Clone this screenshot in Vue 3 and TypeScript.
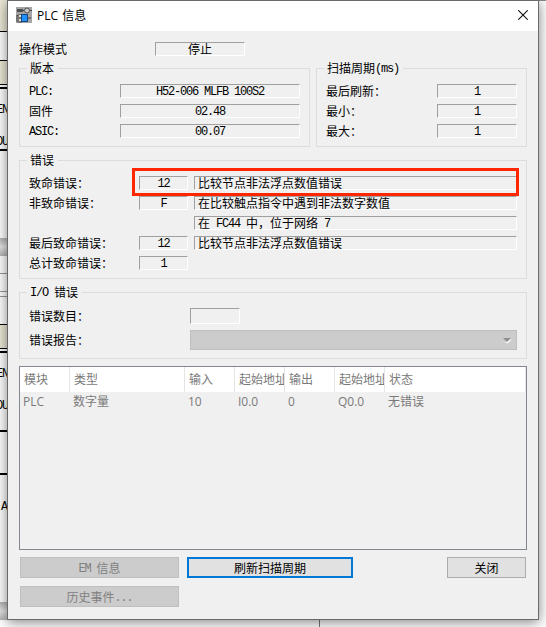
<script setup lang="ts">
import { h, type FunctionalComponent } from 'vue'

// Splits a label into half-width and full-width runs so Latin glyphs keep a 6px cell.
const Label: FunctionalComponent<{ text: string }> = (props) =>
  h(
    'span',
    { class: 'label' },
    (props.text.match(/[\x20-\x7e]+|[^\x20-\x7e]+/g) ?? []).map((run) =>
      h('span', { class: /^[\x20-\x7e]/.test(run) ? 'half' : 'full' }, run),
    ),
  )
Label.props = ['text']

interface Pair {
  name: string
  value: string
}

interface ErrorRow {
  name: string
  code?: string
  message?: string
}

const versions: Pair[] = [
  { name: 'PLC:', value: 'H52-006 MLFB 100S2' },
  { name: '固件', value: '02.48' },
  { name: 'ASIC:', value: '00.07' },
]

const scans: Pair[] = [
  { name: '最后刷新：', value: '1' },
  { name: '最小：', value: '1' },
  { name: '最大：', value: '1' },
]

const errors: ErrorRow[] = [
  { name: '致命错误：', code: '12', message: '比较节点非法浮点数值错误' },
  { name: '非致命错误：', code: 'F', message: '在比较触点指令中遇到非法数字数值' },
  { name: '', message: '在 FC44 中，位于网络 7' },
  { name: '最后致命错误：', code: '12', message: '比较节点非法浮点数值错误' },
  { name: '总计致命错误：', code: '1' },
]

const columns: string[] = ['模块', '类型', '输入', '起始地址', '输出', '起始地址', '状态']
const cells: string[] = ['PLC', '数字量', '10', 'I0.0', '0', 'Q0.0', '无错误']
</script>

<template>
  <div class="desktop">
    <svg class="backdrop" width="546" height="627" viewBox="0 0 546 627" shape-rendering="crispEdges">
      <defs>
        <linearGradient id="thumb" x1="0" y1="0" x2="0" y2="1">
          <stop offset="0" stop-color="#b4b4b4" />
          <stop offset="0.5" stop-color="#e6e6e6" />
          <stop offset="1" stop-color="#b4b4b4" />
        </linearGradient>
      </defs>
      <rect width="546" height="627" fill="#fff" />
      <rect width="546" height="1" fill="#8c8c86" />
      <rect width="8" height="31" fill="#ece9d8" />
      <rect y="31" width="8" height="1" fill="#000" />
      <rect y="60" width="8" height="1" fill="#000" />
      <rect y="61" width="8" height="23" fill="#ece9d8" />
      <rect y="84" width="8" height="1" fill="#000" />
      <rect y="87" width="8" height="2" fill="#000" />
      <rect y="149" width="8" height="2" fill="#000" />
      <rect y="238" width="8" height="18" fill="url(#thumb)" />
      <rect y="273" width="8" height="1" fill="#999" />
      <rect y="291" width="8" height="1" fill="#999" />
      <rect y="296" width="8" height="1" fill="#999" />
      <rect y="324" width="8" height="1" fill="#000" />
      <rect y="325" width="8" height="23" fill="#ece9d8" />
      <rect y="348" width="8" height="1" fill="#000" />
      <rect y="351" width="8" height="2" fill="#000" />
      <rect y="430" width="8" height="2" fill="#000" />
      <rect y="473" width="8" height="2" fill="#000" />
      <rect y="602" width="8" height="18" fill="url(#thumb)" />
      <rect x="319" y="619" width="1" height="8" fill="#777" />
      <text x="-4" y="113">EN</text>
      <text x="-4" y="145">OU</text>
      <text x="-4" y="377">EN</text>
      <text x="-4" y="409">OU</text>
      <text x="1" y="510">A</text>
    </svg>

    <main class="window">
      <header class="titlebar">
        <svg class="app-icon" width="16" height="16" viewBox="0 0 16 16">
          <rect width="16" height="16" fill="#a5a5a5" />
          <rect x="1" y="2" width="6" height="3" fill="#4e4e4e" />
          <path d="M7 3.5h2M14 3.5h2M1 8.5h5M1 8v7M12 11h3" stroke="#444" fill="none" />
          <circle cx="11" cy="3.5" r="2.5" fill="#c8c8c8" stroke="#555" />
          <path d="M2 7h4v9H2z" fill="#777" />
          <rect x="3" y="8" width="2" height="2" fill="#ddd" />
          <rect x="3" y="12" width="2" height="2" fill="#ddd" />
          <rect x="5.5" y="7.5" width="6" height="7" fill="#1e90ff" stroke="#17477c" />
        </svg>
        <h1 class="title">PLC 信息</h1>
        <svg class="close-icon" width="10" height="10" viewBox="0 0 10 10">
          <path d="M0.3 0.3L9.7 9.7M9.7 0.3L0.3 9.7" stroke="#111" stroke-width="1.1" />
        </svg>
      </header>

      <div class="mode">
        <Label text="操作模式" />
        <div class="field"><Label text="停止" /></div>
      </div>

      <div class="top-groups">
        <section class="group versions">
          <h2 class="legend"><Label text="版本" /></h2>
          <div v-for="row in versions" :key="row.name" class="row">
            <Label :text="row.name" />
            <div class="field"><Label :text="row.value" /></div>
          </div>
        </section>
        <section class="group scans">
          <h2 class="legend"><Label text="扫描周期(ms)" /></h2>
          <div v-for="row in scans" :key="row.name" class="row">
            <Label :text="row.name" />
            <div class="field"><Label :text="row.value" /></div>
          </div>
        </section>
      </div>

      <section class="group errors">
        <h2 class="legend"><Label text="错误" /></h2>
        <div v-for="(row, i) in errors" :key="i" class="row">
          <Label :text="row.name" />
          <div v-if="row.code" class="field"><Label :text="row.code" /></div>
          <div v-else></div>
          <div v-if="row.message" class="field message"><Label :text="row.message" /></div>
        </div>
        <div class="highlight"></div>
      </section>

      <section class="group io">
        <h2 class="legend"><Label text="I/O 错误" /></h2>
        <div class="row count">
          <Label text="错误数目：" />
          <div class="field"></div>
        </div>
        <div class="row report">
          <Label text="错误报告：" />
          <div class="select">
            <svg width="9" height="5" viewBox="0 0 9 5">
              <path d="M2 5L8 0.5V2L5 5z" fill="#fff" />
              <path d="M0 0h8L4 4z" fill="#8f8f8f" />
            </svg>
          </div>
        </div>
      </section>

      <div class="table">
        <div class="tr th">
          <span v-for="(c, i) in columns" :key="i" class="cell">{{ c }}</span>
        </div>
        <div class="tr">
          <span v-for="(c, i) in cells" :key="i" class="cell">{{ c }}</span>
        </div>
      </div>

      <div class="actions">
        <button class="btn" disabled><Label text="EM 信息" /></button>
        <button class="btn primary"><Label text="刷新扫描周期" /></button>
        <button class="btn close"><Label text="关闭" /></button>
        <button class="btn" disabled><Label text="历史事件..." /></button>
      </div>
    </main>
  </div>
</template>

<style>
body {
  overflow: hidden;
}
.label {
  display: inline-flex;
  align-items: center;
  height: 12px;
  font-size: 12px;
  line-height: 12px;
  white-space: pre;
}
.label .half {
  padding-top: 2px;
  font-family: "Liberation Mono", monospace;
  letter-spacing: -1.2px;
}
.label .full {
  font-family: "Noto Sans CJK SC", sans-serif;
}
</style>

<style scoped>
.desktop {
  position: relative;
  box-sizing: border-box;
  width: 546px;
  height: 627px;
  padding: 0 7px 7px;
  overflow: hidden;
  color: #000;
}
.backdrop {
  position: absolute;
  inset: 0;
}
.backdrop text {
  font: 12px "Liberation Mono", monospace;
  letter-spacing: -1.2px;
}
.window {
  position: relative;
  box-sizing: border-box;
  width: 532px;
  height: 620px;
  border: 1px solid #6a6a6a;
  background: #f0f0f0;
  box-shadow: 0 2px 12px rgba(0, 0, 0, 0.5);
}
.titlebar {
  display: flex;
  align-items: center;
  box-sizing: border-box;
  height: 30px;
  padding: 0 10px 0 8px;
  background: #fff;
}
.app-icon {
  margin-bottom: 2px;
}
.close-icon {
  margin-bottom: 2px;
}
.title {
  flex: 1;
  margin: 0 0 0 5px;
  font: 400 12px/16px "Open Sans", "Noto Sans CJK SC", sans-serif;
  word-spacing: 1px;
}
.mode {
  display: flex;
  align-items: center;
  height: 14px;
  margin: 11px 0 12px;
  padding-left: 11px;
}
.mode .field {
  width: 90px;
  margin-left: 88px;
}
.field {
  display: flex;
  align-items: center;
  justify-content: center;
  box-sizing: border-box;
  height: 14px;
  border: 1px solid;
  border-color: #a0a0a0 #fff #fff #a0a0a0;
}
.top-groups {
  display: flex;
  gap: 6px;
  margin-left: 11px;
}
.group {
  position: relative;
  box-sizing: border-box;
  border: 1px solid #dcdcdc;
}
.legend {
  position: absolute;
  top: -7px;
  left: 7px;
  display: flex;
  margin: 0;
  padding: 0 4px 0 3px;
  background: #f0f0f0;
  font-weight: 400;
}
.row {
  display: grid;
  align-items: center;
  height: 14px;
  margin-bottom: 6px;
}
.versions,
.scans {
  height: 79px;
  padding-top: 15px;
}
.versions {
  width: 291px;
  padding-left: 9px;
}
.versions .row {
  grid-template-columns: 91px 180px;
}
.scans {
  width: 211px;
  padding-left: 9px;
}
.scans .row {
  grid-template-columns: 111px 80px;
}
.errors {
  width: 508px;
  height: 119px;
  margin: 13px 0 0 11px;
  padding: 15px 0 0 9px;
}
.errors .row {
  grid-template-columns: 110px 49px 323px;
}
.errors .row .message {
  margin-left: 6px;
  width: 323px;
  justify-content: flex-start;
  padding-left: 3px;
}
.highlight {
  position: absolute;
  top: 7px;
  left: 112px;
  box-sizing: border-box;
  width: 387px;
  height: 28px;
  border: 3px solid #ff2600;
}
.io {
  width: 508px;
  height: 67px;
  margin: 13px 0 0 11px;
  padding: 15px 0 0 9px;
}
.io .row {
  grid-template-columns: 161px 327px;
}
.io .count {
  height: 16px;
}
.io .count .field {
  width: 50px;
  height: 16px;
}
.io .report {
  height: 20px;
  margin: 0;
}
.select {
  display: flex;
  align-items: center;
  justify-content: flex-end;
  box-sizing: border-box;
  height: 20px;
  padding-right: 4px;
  border: 1px solid #bfbfbf;
  background: #ccc;
}
.table {
  box-sizing: border-box;
  width: 508px;
  height: 184px;
  margin: 7px 0 0 11px;
  border: 1px solid #828790;
  color: #7a7a7a;
  font: 12px/18px "Open Sans", "Noto Sans CJK SC", sans-serif;
}
.tr {
  display: grid;
  grid-template-columns: 50px 115px 50px 50px 50px 50px 141px;
  align-items: center;
  height: 20px;
}
.th {
  height: 25px;
  background: #fff;
}
.cell {
  box-sizing: border-box;
  padding-left: 3px;
  overflow: hidden;
  white-space: nowrap;
}
.th .cell {
  height: 25px;
  padding-left: 4px;
  border-right: 1px solid #e5e5e5;
  line-height: 26px;
}
.actions {
  display: grid;
  grid-template-columns: 159px 166px 79px;
  grid-auto-rows: 21px;
  gap: 8px;
  margin: 7px 0 0 12px;
}
.btn {
  display: flex;
  align-items: center;
  justify-content: center;
  box-sizing: border-box;
  height: 21px;
  margin: 0;
  padding: 0;
  border: 1px solid #adadad;
  background: #e1e1e1;
  color: #000;
}
.btn:disabled {
  border-color: #bfbfbf;
  background: #ccc;
  color: #808080;
}
.btn.primary {
  border: 2px solid #0078d7;
}
.btn.close {
  width: 79px;
  margin-left: 86px;
}
</style>
